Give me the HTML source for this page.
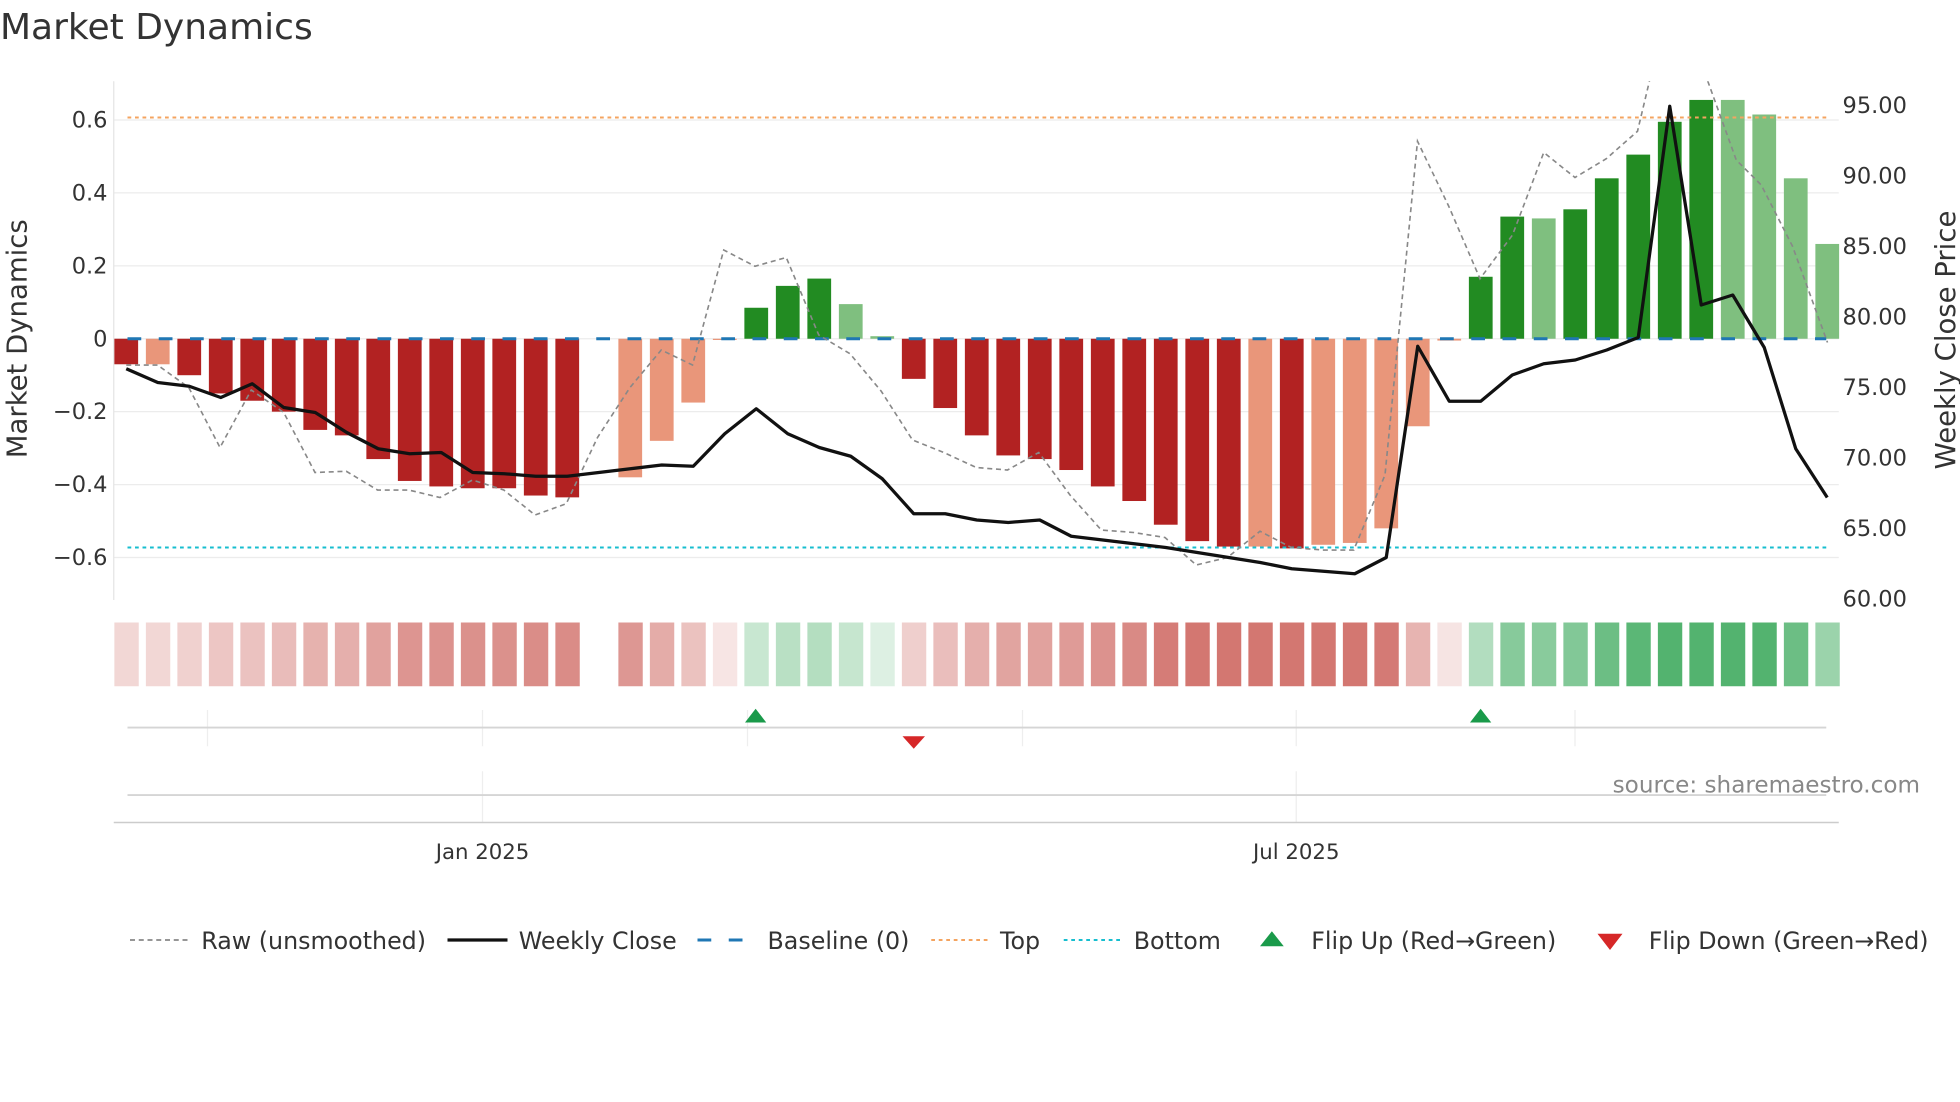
<!DOCTYPE html>
<html><head><meta charset="utf-8"><style>
html,body{margin:0;padding:0;background:#fff;}
svg{display:block;font-family:"DejaVu Sans","Liberation Sans",sans-serif;}
</style></head><body>
<svg id="s" width="1960" height="1102" viewBox="0 0 1568 881.6" xmlns="http://www.w3.org/2000/svg">
<defs><clipPath id="cp"><rect x="85" y="65" width="1390" height="420"/></clipPath></defs>
<text x="0" y="31" font-size="28.8" fill="#333">Market Dynamics</text>
<g id="g"></g>
</svg>
<script>
const NS="http://www.w3.org/2000/svg",g=document.getElementById('g');
function el(t,a,txt){const e=document.createElementNS(NS,t);for(const k in a)e.setAttribute(k,a[k]);if(txt!==undefined)e.textContent=txt;g.appendChild(e);return e;}
const X=i=>101+i*25.2, Y=v=>271-v*291.7;
[0.6,0.4,0.2,0,-0.2,-0.4,-0.6].forEach(v=>{el('line',{x1:91,x2:1471,y1:Y(v),y2:Y(v),stroke:'#ececec','stroke-width':1});
el('text',{x:86,y:Y(v)+6,'font-size':18,fill:'#333','text-anchor':'end'},(v<0?'\u2212':'')+(v==0?'0':Math.abs(v).toFixed(1)));});
el('line',{x1:91,x2:91,y1:65,y2:480,stroke:'#e4e4e4','stroke-width':1});
[95,90,85,80,75,70,65,60].forEach(p=>{el('text',{x:1474,y:479-(p-60)*11.28+6,'font-size':18,fill:'#333'},p.toFixed(2));});
el('text',{transform:'translate(21,271) rotate(-90)','font-size':22,fill:'#333','text-anchor':'middle'},'Market Dynamics');
el('text',{transform:'translate(1564,272) rotate(-90)','font-size':22,fill:'#333','text-anchor':'middle'},'Weekly Close Price');
const D='#b22222',L='#e9967a',G='#228b22',LG='#7fbf7f';
const bars=[[-.07,D],[-.07,L],[-.10,D],[-.15,D],[-.17,D],[-.20,D],[-.25,D],[-.265,D],[-.33,D],[-.39,D],[-.405,D],[-.41,D],[-.41,D],[-.43,D],[-.435,D],[0,L],[-.38,L],[-.28,L],[-.175,L],[-.003,L],[.085,G],[.145,G],[.165,G],[.095,LG],[.007,LG],[-.11,D],[-.19,D],[-.265,D],[-.32,D],[-.33,D],[-.36,D],[-.405,D],[-.445,D],[-.51,D],[-.555,D],[-.57,D],[-.57,L],[-.575,D],[-.565,L],[-.56,L],[-.52,L],[-.24,L],[-.005,L],[.17,G],[.335,G],[.33,LG],[.355,G],[.44,G],[.505,G],[.595,G],[.655,G],[.655,LG],[.615,LG],[.44,LG],[.26,LG]];
bars.forEach((b,i)=>{const v=b[0];if(v==0)return;const y0=Y(0),y1=Y(v);el('rect',{x:X(i)-9.5,width:19,y:Math.min(y0,y1),height:Math.max(Math.abs(y1-y0),1),fill:b[1]});});
el('line',{x1:102,x2:1461,y1:94,y2:94,stroke:'#f4a460','stroke-width':1.6,'stroke-dasharray':'3 3'});
el('line',{x1:102,x2:1461,y1:438,y2:438,stroke:'#17becf','stroke-width':1.6,'stroke-dasharray':'3 3'});
el('line',{x1:102,x2:1461,y1:271,y2:271,stroke:'#1f77b4','stroke-width':2.4,'stroke-dasharray':'11 14'});
const raw=[[101,292],[126,292],[151,310],[176,358],[201,312],[227,330],[252,378],[277,377],[302,392],[327,392],[352,398],[378,384],[403,392],[428,412],[453,403],[478,350],[504,310],[529,280],[554,292],[579,200],[604,213],[629,206],[655,268],[680,283],[705,313],[730,352],[755,362],[781,374],[806,376],[831,362],[856,396],[881,424],[907,426],[932,430],[957,452],[982,446],[1008,425],[1033,438],[1058,440],[1083,440],[1108,380],[1134,113],[1159,165],[1184,223],[1210,188],[1235,122],[1260,142],[1285,127],[1310,105],[1335,0],[1350,20],[1389,128],[1409,148],[1434,197],[1462,274]];
el('polyline',{points:raw.map(p=>p.join(',')).join(' '),fill:'none',stroke:'#888','stroke-width':1.3,'stroke-dasharray':'4 3','clip-path':'url(#cp)'});
const cl=[295,306,309,318,307,326,330,346,359,363,362,378,379,381,381,378,375,372,373,347,327,347,358,365,383,411,411,416,418,416,429,432,435,434,438,442,446,450,455,457,459,446,277,321,321,300,291,288,280,270,85,244,236,278,359,398];
const cl2=cl.slice(0,33).concat(cl.slice(34));
el('polyline',{points:cl2.map((y,i)=>X(i)+','+y).join(' '),fill:'none',stroke:'#111','stroke-width':2.6,'stroke-linejoin':'round'});
bars.forEach((b,i)=>{if(i==15)return;const v=b[0];const a=Math.min(0.8,0.15+0.8*Math.abs(v)/0.66);const red=v<=0;
const c=red?'rgba(200,85,78,'+a+')':'rgba(40,160,75,'+a+')';el('rect',{x:X(i)-9.5,y:498,width:19.5,height:51,fill:c});});
[166,386,598,818,1037,1260].forEach(x=>el('line',{x1:x,x2:x,y1:568,y2:597,stroke:'#eee','stroke-width':1}));
el('line',{x1:102,x2:1461,y1:582,y2:582,stroke:'#d5d5d5','stroke-width':1.5});
el('polygon',{points:'596,578 613,578 604.5,567',fill:'#1a9a4a'});
el('polygon',{points:'1176,578 1193,578 1184.5,567',fill:'#1a9a4a'});
el('polygon',{points:'722,589 740,589 731,599',fill:'#d62728'});
[386,1037].forEach(x=>el('line',{x1:x,x2:x,y1:617,y2:658,stroke:'#eee','stroke-width':1}));
el('line',{x1:102,x2:1461,y1:636,y2:636,stroke:'#d5d5d5','stroke-width':1.5});
el('line',{x1:91,x2:1471,y1:658,y2:658,stroke:'#ccc','stroke-width':1.2});
el('text',{x:1536,y:634,'font-size':18.5,fill:'#888','text-anchor':'end'},'source: sharemaestro.com');
el('text',{x:386,y:687,'font-size':17,fill:'#333','text-anchor':'middle'},'Jan 2025');
el('text',{x:1037,y:687,'font-size':17,fill:'#333','text-anchor':'middle'},'Jul 2025');
const ly=752;
el('line',{x1:104,x2:150,y1:ly,y2:ly,stroke:'#888','stroke-width':1.4,'stroke-dasharray':'4 3'});
el('line',{x1:358,x2:406,y1:ly,y2:ly,stroke:'#111','stroke-width':2.6});
el('line',{x1:558,x2:604,y1:ly,y2:ly,stroke:'#1f77b4','stroke-width':2.4,'stroke-dasharray':'11 14'});
el('line',{x1:745,x2:790,y1:ly,y2:ly,stroke:'#f4a460','stroke-width':1.6,'stroke-dasharray':'3 3'});
el('line',{x1:851,x2:897,y1:ly,y2:ly,stroke:'#17becf','stroke-width':1.6,'stroke-dasharray':'3 3'});
el('polygon',{points:'1008,757 1027,757 1017.5,745',fill:'#1a9a4a'});
el('polygon',{points:'1278,747 1298,747 1288,760',fill:'#d62728'});
[[161,'Raw (unsmoothed)'],[415,'Weekly Close'],[614,'Baseline (0)'],[800,'Top'],[907,'Bottom'],[1049,'Flip Up (Red\u2192Green)'],[1319,'Flip Down (Green\u2192Red)']].forEach(t=>el('text',{x:t[0],y:ly+7,'font-size':19,fill:'#333'},t[1]));
</script>
</body></html>
